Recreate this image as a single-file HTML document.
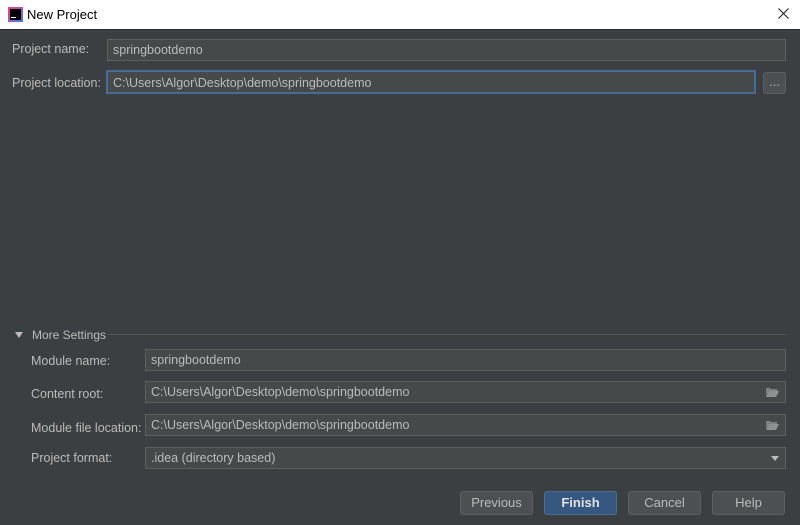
<!DOCTYPE html>
<html><head><style>
*{margin:0;padding:0;box-sizing:border-box}
body{width:800px;height:525px;background:#3c3f41;font-family:"Liberation Sans","Noto Sans CJK SC",sans-serif;font-size:12.5px;color:#bbbbbb;position:relative;overflow:hidden}
.title{position:absolute;left:0;top:0;width:800px;height:29px;background:#fff;color:#000;font-size:13px}
.abs{position:absolute}
.f{position:absolute;background:#45494a;border:1px solid #5e6060;color:#bbb;padding-left:5px;line-height:20px;height:22px}
.lbl{position:absolute;line-height:16px}
.btn{position:absolute;top:491px;width:73px;height:24px;border:1px solid #5e6060;border-radius:3px;background:#4c5052;text-align:center;line-height:22px;font-size:13px}
.fold{position:absolute;right:6px;top:5px;width:13px;height:10px}
</style></head><body>
<div class="title">
 <div class="abs" style="left:8px;top:7px;width:15px;height:15px;background:linear-gradient(135deg,#fc3a7a,#3a7cfc);"><div class="abs" style="left:2px;top:2px;width:11px;height:11px;background:#000"></div><div class="abs" style="left:3px;top:10px;width:5px;height:1px;background:#fff"></div></div>
 <div class="abs" style="left:27px;top:7px">New Project</div>
 <svg class="abs" style="left:778px;top:8px" width="11" height="11" viewBox="0 0 11 11"><path d="M0.5 0.5L10.5 10.5M10.5 0.5L0.5 10.5" stroke="#222" stroke-width="1.1"/></svg>
</div>
<div class="abs" style="left:0;top:29px;width:800px;height:1px;background:#2b2b2b"></div>
<div class="lbl" style="left:12px;top:41px">Project name:</div>
<div class="f" style="left:107px;top:39px;width:679px">springbootdemo</div>
<div class="lbl" style="left:12px;top:75px">Project location:</div>
<div class="f" style="left:106px;top:70px;width:650px;height:24px;border:2px solid #466d94;line-height:23px;padding-left:5px">C:\Users\Algor\Desktop\demo\springbootdemo</div>
<div class="abs" style="left:763px;top:72px;width:23px;height:22px;border:1px solid #5e6060;border-radius:3px;background:#4c5052;text-align:center;line-height:18px">...</div>
<div class="abs" style="left:15px;top:332px;width:0;height:0;border-left:4px solid transparent;border-right:4px solid transparent;border-top:6px solid #bbb"></div>
<div class="lbl" style="left:32px;top:327px;font-size:12px">More Settings</div>
<div class="abs" style="left:108px;top:334px;width:678px;height:1px;background:#555859"></div>
<div class="lbl" style="left:31px;top:353px">Module name:</div>
<div class="f" style="left:145px;top:349px;width:641px">springbootdemo</div>
<div class="lbl" style="left:31px;top:386px">Content root:</div>
<div class="f" style="left:145px;top:381px;width:641px">C:\Users\Algor\Desktop\demo\springbootdemo<svg class="fold" viewBox="0 0 13 10"><path d="M0 1h4l1 1h6v2H3L0 9z" fill="#7d8081"/><path d="M3 4h10l-3 6H0z" fill="#8f9293"/></svg></div>
<div class="lbl" style="left:31px;top:420px">Module file location:</div>
<div class="f" style="left:145px;top:414px;width:641px">C:\Users\Algor\Desktop\demo\springbootdemo<svg class="fold" viewBox="0 0 13 10"><path d="M0 1h4l1 1h6v2H3L0 9z" fill="#7d8081"/><path d="M3 4h10l-3 6H0z" fill="#8f9293"/></svg></div>
<div class="lbl" style="left:31px;top:450px">Project format:</div>
<div class="f" style="left:145px;top:447px;width:641px">.idea (directory based)<div class="abs" style="right:6px;top:8px;width:0;height:0;border-left:4px solid transparent;border-right:4px solid transparent;border-top:5px solid #bbb"></div></div>
<div class="btn" style="left:460px">Previous</div>
<div class="btn" style="left:544px;background:#365880;border-color:#4c708c;color:#dfe1e5;font-weight:bold">Finish</div>
<div class="btn" style="left:628px">Cancel</div>
<div class="btn" style="left:712px">Help</div>
</body></html>
